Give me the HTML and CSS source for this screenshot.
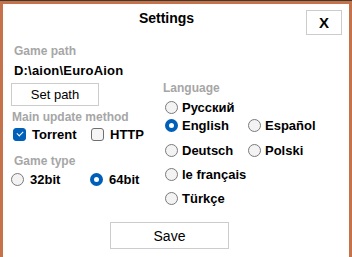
FILE: index.html
```html
<!DOCTYPE html>
<html lang="en">
<head>
  <meta charset="UTF-8">
  <title>Settings</title>
  <link rel="stylesheet" href="styles.css">
</head>
<body>
  <div class="window">
    <div class="header">
      <div class="title">Settings</div>
      <button class="close">X</button>
    </div>

    <div class="columns">
      <div class="col-left">
        <div class="label label-indent">Game path</div>
        <div class="path">D:&#92;aion&#92;EuroAion</div>
        <button class="btn set-path">Set path</button>

        <div class="label">Main update method</div>
        <div class="options">
          <label class="opt opt-torrent"><span class="check on"></span>Torrent</label>
          <label class="opt"><span class="check"></span>HTTP</label>
        </div>

        <div class="label label-indent label-type">Game type</div>
        <div class="options">
          <label class="opt opt-32"><span class="radio"></span>32bit</label>
          <label class="opt"><span class="radio on"></span>64bit</label>
        </div>
      </div>

      <div class="col-right">
        <div class="label">Language</div>
        <div class="lang-grid">
          <label class="opt"><span class="radio"></span>Русский</label>
          <span></span>
          <label class="opt"><span class="radio on"></span>English</label>
          <label class="opt"><span class="radio"></span>Español</label>
          <label class="opt"><span class="radio"></span>Deutsch</label>
          <label class="opt"><span class="radio"></span>Polski</label>
          <label class="opt"><span class="radio"></span>le français</label>
          <span></span>
          <label class="opt"><span class="radio"></span>Türkçe</label>
        </div>
      </div>
    </div>

    <div class="footer">
      <button class="btn save">Save</button>
    </div>
  </div>
</body>
</html>
```

FILE: styles.css
```css
html, body {
  margin: 0;
  height: 100%;
}

body {
  background: #3b3a33;
  font-family: 'Liberation Sans', Arial, sans-serif;
  color: #000;
  overflow: hidden;
}

.window {
  margin-top: 1px;
  height: 100%;
  box-sizing: border-box;
  border: 3px solid #c5714a;
  border-bottom: none;
  background: #fff;
}

.header {
  display: flex;
  align-items: flex-start;
  padding: 4px 7px 0 0;
}

.title {
  flex: 1;
  padding-left: 24px;
  text-align: center;
  font-size: 14px;
  font-weight: bold;
  line-height: 20px;
}

.close {
  margin-top: 2px;
  width: 36px;
  height: 25px;
  padding: 0;
  border: 1px solid #cccccc;
  background: #fff;
  font-family: 'Liberation Sans', Arial, sans-serif;
  font-size: 15px;
  font-weight: bold;
  color: #000;
}

.columns {
  display: flex;
  align-items: flex-start;
}

.col-left {
  margin-left: 8px;
  margin-top: 9px;
  width: 151px;
}

.col-right {
  margin-top: 46px;
}

.label {
  font-size: 12px;
  font-weight: bold;
  line-height: 15px;
  color: #a6a6a6;
  padding-left: 1px;
}

.label-indent {
  padding-left: 3px;
}

.path {
  margin-top: 4px;
  padding-left: 3px;
  font-size: 13px;
  font-weight: bold;
  line-height: 16px;
  letter-spacing: 0.2px;
  white-space: nowrap;
}

.btn {
  display: block;
  padding: 0;
  border: 1px solid #cccccc;
  background: #fff;
  font-family: 'Liberation Sans', Arial, sans-serif;
  font-size: 13px;
  color: #000;
}

.set-path {
  margin-top: 4px;
  margin-bottom: 4px;
  width: 88px;
  height: 23px;
}

.options {
  display: flex;
  margin-top: 1px;
  height: 17px;
}

.label-type {
  margin-top: 11px;
}

.options + .label-type + .options {
  margin-top: 2px;
}

.opt {
  display: flex;
  align-items: center;
  gap: 6px;
  height: 17px;
  font-size: 13px;
  font-weight: bold;
  white-space: nowrap;
}

.opt-torrent {
  margin-left: 2px;
  width: 78px;
}

.opt-32 {
  width: 79px;
}

.check {
  width: 13px;
  height: 13px;
  box-sizing: border-box;
  border: 1px solid #6f6f6f;
  border-radius: 3px;
  background: #f5f5f5;
  position: relative;
}

.check.on {
  border-color: #005fb8;
  background: #005fb8;
}

.check.on::after {
  content: "";
  position: absolute;
  left: 3px;
  top: 2px;
  width: 5px;
  height: 3px;
  border-left: 1px solid #fff;
  border-bottom: 1px solid #fff;
  transform: rotate(-45deg);
}

.radio {
  width: 13px;
  height: 13px;
  box-sizing: border-box;
  border: 1px solid #7a7a7a;
  border-radius: 50%;
  background: #f3f3f3;
}

.radio.on {
  border: 4px solid #005fb8;
  background: #fff;
}

.lang-grid {
  display: grid;
  margin-top: 1px;
  padding-left: 3px;
  grid-template-columns: 83px auto;
  grid-template-rows: 18px 25px 24px 24px 20px;
}

.lang-grid .opt {
  height: 20px;
  gap: 4px;
}

.footer {
  margin-top: 14px;
  padding-left: 107px;
}

.save {
  width: 119px;
  height: 27px;
  font-size: 14px;
}
```
